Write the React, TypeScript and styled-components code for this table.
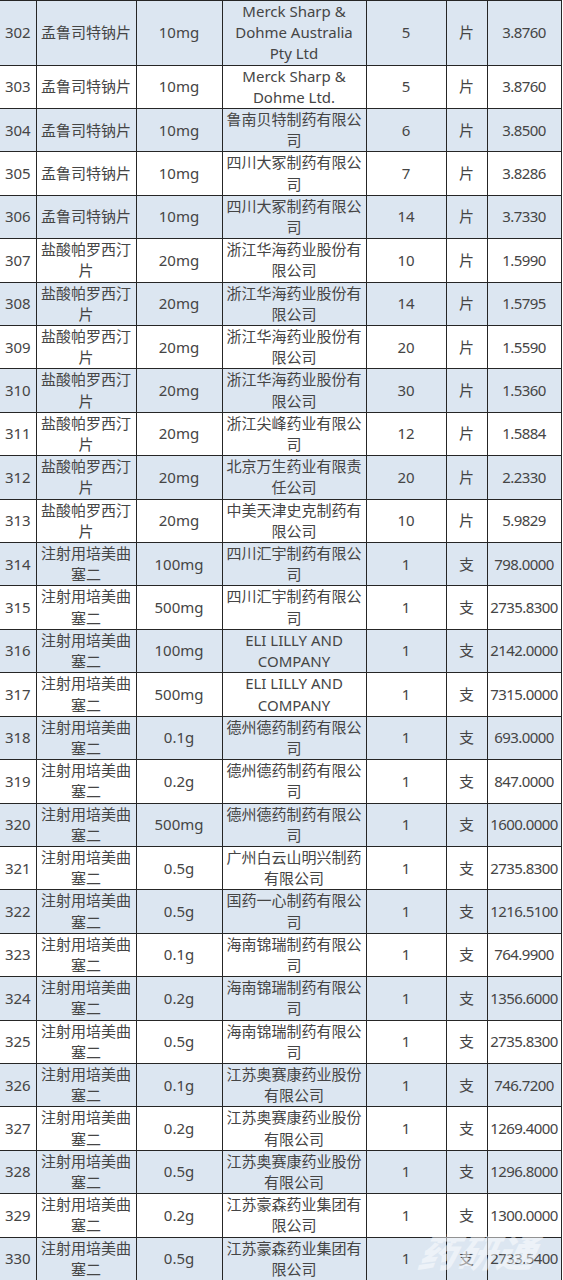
import React from "react";
import styled, { createGlobalStyle } from "styled-components";

const GlobalStyle = createGlobalStyle`
  html, body {
    margin: 0;
    padding: 0;
    background: #ffffff;
  }
  body {
    font-family: "Noto Sans", "Noto Sans CJK SC", sans-serif;
  }
`;

type Row = {
  no: number;
  name: string;
  spec: string;
  maker: string;
  qty: number;
  unit: string;
  price: string;
};

const P = "孟鲁司特钠片";
const Y = "盐酸帕罗西汀片";
const Z = "注射用培美曲塞二";

const rows: Row[] = [
  { no: 302, name: P, spec: "10mg", maker: "Merck Sharp & Dohme Australia Pty Ltd", qty: 5, unit: "片", price: "3.8760" },
  { no: 303, name: P, spec: "10mg", maker: "Merck Sharp & Dohme Ltd.", qty: 5, unit: "片", price: "3.8760" },
  { no: 304, name: P, spec: "10mg", maker: "鲁南贝特制药有限公司", qty: 6, unit: "片", price: "3.8500" },
  { no: 305, name: P, spec: "10mg", maker: "四川大冢制药有限公司", qty: 7, unit: "片", price: "3.8286" },
  { no: 306, name: P, spec: "10mg", maker: "四川大冢制药有限公司", qty: 14, unit: "片", price: "3.7330" },
  { no: 307, name: Y, spec: "20mg", maker: "浙江华海药业股份有限公司", qty: 10, unit: "片", price: "1.5990" },
  { no: 308, name: Y, spec: "20mg", maker: "浙江华海药业股份有限公司", qty: 14, unit: "片", price: "1.5795" },
  { no: 309, name: Y, spec: "20mg", maker: "浙江华海药业股份有限公司", qty: 20, unit: "片", price: "1.5590" },
  { no: 310, name: Y, spec: "20mg", maker: "浙江华海药业股份有限公司", qty: 30, unit: "片", price: "1.5360" },
  { no: 311, name: Y, spec: "20mg", maker: "浙江尖峰药业有限公司", qty: 12, unit: "片", price: "1.5884" },
  { no: 312, name: Y, spec: "20mg", maker: "北京万生药业有限责任公司", qty: 20, unit: "片", price: "2.2330" },
  { no: 313, name: Y, spec: "20mg", maker: "中美天津史克制药有限公司", qty: 10, unit: "片", price: "5.9829" },
  { no: 314, name: Z, spec: "100mg", maker: "四川汇宇制药有限公司", qty: 1, unit: "支", price: "798.0000" },
  { no: 315, name: Z, spec: "500mg", maker: "四川汇宇制药有限公司", qty: 1, unit: "支", price: "2735.8300" },
  { no: 316, name: Z, spec: "100mg", maker: "ELI LILLY AND COMPANY", qty: 1, unit: "支", price: "2142.0000" },
  { no: 317, name: Z, spec: "500mg", maker: "ELI LILLY AND COMPANY", qty: 1, unit: "支", price: "7315.0000" },
  { no: 318, name: Z, spec: "0.1g", maker: "德州德药制药有限公司", qty: 1, unit: "支", price: "693.0000" },
  { no: 319, name: Z, spec: "0.2g", maker: "德州德药制药有限公司", qty: 1, unit: "支", price: "847.0000" },
  { no: 320, name: Z, spec: "500mg", maker: "德州德药制药有限公司", qty: 1, unit: "支", price: "1600.0000" },
  { no: 321, name: Z, spec: "0.5g", maker: "广州白云山明兴制药有限公司", qty: 1, unit: "支", price: "2735.8300" },
  { no: 322, name: Z, spec: "0.5g", maker: "国药一心制药有限公司", qty: 1, unit: "支", price: "1216.5100" },
  { no: 323, name: Z, spec: "0.1g", maker: "海南锦瑞制药有限公司", qty: 1, unit: "支", price: "764.9900" },
  { no: 324, name: Z, spec: "0.2g", maker: "海南锦瑞制药有限公司", qty: 1, unit: "支", price: "1356.6000" },
  { no: 325, name: Z, spec: "0.5g", maker: "海南锦瑞制药有限公司", qty: 1, unit: "支", price: "2735.8300" },
  { no: 326, name: Z, spec: "0.1g", maker: "江苏奥赛康药业股份有限公司", qty: 1, unit: "支", price: "746.7200" },
  { no: 327, name: Z, spec: "0.2g", maker: "江苏奥赛康药业股份有限公司", qty: 1, unit: "支", price: "1269.4000" },
  { no: 328, name: Z, spec: "0.5g", maker: "江苏奥赛康药业股份有限公司", qty: 1, unit: "支", price: "1296.8000" },
  { no: 329, name: Z, spec: "0.2g", maker: "江苏豪森药业集团有限公司", qty: 1, unit: "支", price: "1300.0000" },
  { no: 330, name: Z, spec: "0.5g", maker: "江苏豪森药业集团有限公司", qty: 1, unit: "支", price: "2733.5400" },
];

const Page = styled.div`
  position: relative;
  width: 563px;
  height: 1280px;
  overflow: hidden;
`;

const Table = styled.table`
  border-collapse: collapse;
  table-layout: fixed;
  width: 561px;
  color: #454545;
  font-size: 15px;
  line-height: 21.2px;
`;

const Tr = styled.tr<{ $shaded: boolean }>`
  background: ${(p) => (p.$shaded ? "#dce6f1" : "#ffffff")};
`;

const Td = styled.td`
  border: 1px solid #262626;
  padding: 0 2px;
  text-align: center;
  vertical-align: middle;
  word-break: break-all;

  &:first-child {
    border-left: none;
  }
`;

const Price = styled(Td)`
  padding: 0;
  white-space: nowrap;
  letter-spacing: -0.6px;
`;

const Maker = styled(Td)`
  word-break: normal;
  overflow-wrap: anywhere;
`;

const Watermark = styled.div`
  position: absolute;
  left: 420px;
  top: 1228px;
  font-family: "Noto Sans CJK SC", sans-serif;
  font-size: 38px;
  line-height: 46px;
  font-weight: 900;
  font-style: italic;
  letter-spacing: 1px;
  color: rgba(255, 255, 255, 0.5);
  pointer-events: none;
  transform: skewX(-12deg);
`;

const widths = [36, 100, 86, 144, 80, 41, 74];

export default function App() {
  return (
    <Page>
      <GlobalStyle />
      <Table>
        <colgroup>
          {widths.map((w, i) => (
            <col key={i} style={{ width: w }} />
          ))}
        </colgroup>
        <tbody>
          {rows.map((r, i) => (
            <Tr key={r.no} $shaded={i % 2 === 0}>
              <Td>{r.no}</Td>
              <Td>{r.name}</Td>
              <Td>{r.spec}</Td>
              <Maker>{r.maker}</Maker>
              <Td>{r.qty}</Td>
              <Td>{r.unit}</Td>
              <Price>{r.price}</Price>
            </Tr>
          ))}
        </tbody>
      </Table>
      <Watermark>药研通</Watermark>
    </Page>
  );
}
